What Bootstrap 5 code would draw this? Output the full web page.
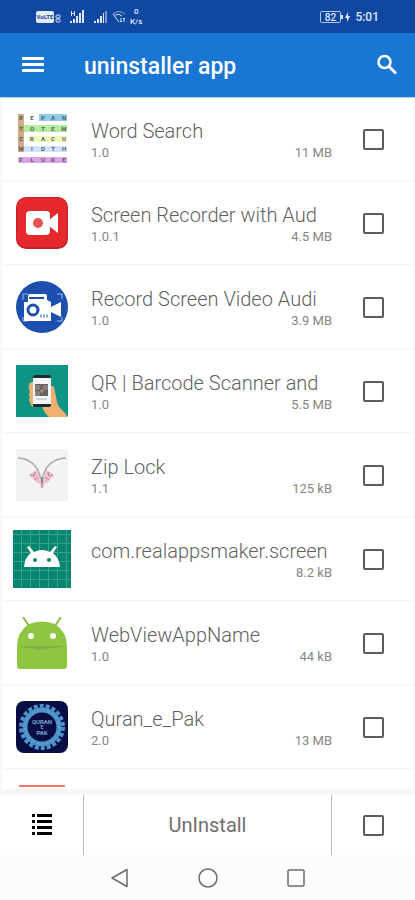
<!DOCTYPE html>
<html lang="en">
<head>
<meta charset="utf-8">
<meta name="viewport" content="width=device-width, initial-scale=1">
<title>uninstaller app</title>
<link href="https://cdn.jsdelivr.net/npm/bootstrap@5.3.0/dist/css/bootstrap.min.css" rel="stylesheet">
<style>
  body { font-family: Roboto, "Liberation Sans", sans-serif; color: #5f5f5f; background: #fafafa; }
  svg { display: block; flex: none; }
  .status-bar { height: 33px; padding: 0 36px; background: #0f47a1; color: #dfe8f8; font-size: 12px; font-weight: 500; }
  .net-speed { font-size: 8px; line-height: 10px; text-align: center; }
  .title-bar { height: 65px; padding: 0 16px 0 20px; background: #1976d2; border-bottom: 1px solid #b5d3f1; }
  .title-bar h1 { font-size: 23px; line-height: 28px; font-weight: 500; margin-left: 38px; padding-top: 3px; }
  .app-list { min-height: 0; border: solid #f7f7f7; border-width: 0 2px 6px; background: #fff; }
  .app-row { height: 84px; border-bottom: 2px solid #f6f6f6; }
  .side-cell { width: 80px; }
  .app-name { font-size: 20px; line-height: 24px; font-weight: 300; }
  .app-meta { font-size: 13px; line-height: 20px; color: #858585; }
  .app-info { padding: 4px 1px 0 9px; }
  .form-check-input.pick { width: 21px; height: 21px; margin: 0; border: 2px solid #5c5c5c; border-radius: 2px; background-color: #fff; }
  .form-check-input.pick:checked { background-color: #1976d2; border-color: #1976d2; }
  .action-bar { height: 60px; background: #fff; }
  .action-bar .side-cell { width: 83px; }
  .uninstall { font-size: 20px; line-height: 24px; color: #707070; border: solid #bdbdbd; border-width: 0 1px; }
  .system-nav { height: 45px; background: #fcfcfc; gap: 64px; }
</style>
<script defer src="https://cdn.jsdelivr.net/npm/bootstrap@5.3.0/dist/js/bootstrap.bundle.min.js"></script>
</head>
<body>
<div class="vh-100 d-flex flex-column overflow-hidden">

  <div class="status-bar d-flex align-items-center flex-shrink-0">
    <svg width="25" height="14" viewBox="0 0 25 14" role="img" aria-label="VoLTE">
      <rect y="1" width="18" height="12" rx="2" fill="#e3ebf8"/>
      <text x="9" y="9" font-size="6" font-weight="700" text-anchor="middle" fill="#0f47a1">VoLTE</text>
      <rect x="20" y="5" width="4" height="3" rx="1" fill="none" stroke="#e3ebf8"/><rect x="20" y="9" width="4" height="3" rx="1" fill="none" stroke="#e3ebf8"/>
    </svg>
    <svg class="ms-2" width="16" height="14" viewBox="0 0 16 14" fill="#dce6f6" aria-hidden="true"><path d="M1 13v-2h2v2zM4 13V9h2v4zM7 13V6h2v7zM10 13V3h2v10zM13 13V0h2v13zM2 1h1v2h2V1h1v5H5V4H3v2H2z"/></svg>
    <svg class="ms-2" width="15" height="14" viewBox="0 0 15 14" fill="#dce6f6" aria-hidden="true"><path d="M1 13v-2h2v2zM4 13V9h2v4zM7 13V6h2v7zM10 13V3h1v10z"/><path d="M12 13V1h2v12z" opacity=".5"/></svg>
    <svg class="ms-1" width="14" height="14" viewBox="0 0 14 14" fill="none" stroke="#dce6f6" aria-hidden="true"><path d="M1 4q6-5 12 0" opacity=".6"/><path d="M1 4l6 8M3 5q4-2 7 1M9 12V8m-1 3 1 1 1-1M12 12V8m-1 1 1-1 1 1"/></svg>
    <div class="net-speed ms-1">0<br>K/s</div>
    <svg class="ms-auto" width="31" height="14" viewBox="0 0 31 14" role="img" aria-label="Battery 82%, charging">
      <rect x=".5" y="1.500" width="20" height="11" rx="1" fill="none" stroke="#b7caec"/>
      <path d="M22 5v4" stroke="#dce6f6" stroke-width="2"/>
      <text x="10.500" y="11" font-size="10" text-anchor="middle" fill="#dce6f6">82</text>
      <path d="M28 2l-3 6h2v4l3-6h-2z" fill="#e8effa"/>
    </svg>
    <span class="ms-1">5:01</span>
  </div>

  <header class="title-bar d-flex align-items-center flex-shrink-0 text-white">
    <button class="btn p-0 border-0 text-white" type="button" aria-label="Menu">
      <svg width="26" height="26" viewBox="0 0 26 26" fill="currentColor"><path d="M2 5h22v3H2zM2 11h22v3H2zM2 17h22v3H2z"/></svg>
    </button>
    <h1 class="mb-0">uninstaller app</h1>
    <button class="btn p-0 border-0 text-white ms-auto" type="button" aria-label="Search">
      <svg width="24" height="24" viewBox="0 0 24 24" fill="none" stroke="currentColor"><circle cx="9.500" cy="9" r="6" stroke-width="2.500"/><path d="M14 13.500l7 7" stroke-width="3"/></svg>
    </button>
  </header>

  <main class="app-list flex-grow-1 overflow-hidden">
    <ul class="list-unstyled mb-0">
      <li class="app-row d-flex align-items-center">
        <div class="side-cell d-flex justify-content-center">
          <svg width="52" height="52" viewBox="0 0 52 52" aria-hidden="true">
            <path fill="#8ecbe8" d="M23 1h28v7H23z"/><path fill="#b2ec9c" d="M2 12h49v7H2z"/><path fill="#edf9b9" d="M13 23h38v6H13z"/><path fill="#cfe4fa" d="M2 33h49v6H2z"/><path fill="#d9a4e8" d="M2 44h49v6H2z"/><path fill="#c89d77" fill-opacity=".85" d="M2 1h6v38H2z"/>
            <g font-size="6" font-weight="700" fill="#59605b" text-anchor="middle">
              <text x="5 16 27 37 48" y="7">BEPAN</text><text x="5 16 27 37 48" y="18">TOTEM</text><text x="5 16 27 37 48" y="28">ERACU</text><text x="5 16 27 37 48" y="38">WIDTH</text><text x="5 16 27 37 48" y="49">FLUKE</text>
            </g>
          </svg>
        </div>
        <div class="app-info flex-grow-1">
          <div class="app-name"><label for="a1">Word Search</label></div>
          <div class="app-meta d-flex justify-content-between"><span>1.0</span><span>11 MB</span></div>
        </div>
        <div class="side-cell d-flex justify-content-center"><input class="form-check-input pick" type="checkbox" id="a1"></div>
      </li>
      <li class="app-row d-flex align-items-center">
        <div class="side-cell d-flex justify-content-center">
          <svg width="52" height="52" viewBox="0 0 52 52" aria-hidden="true">
            <rect width="52" height="52" rx="10" fill="#c92127"/><rect x="1" y="1" width="50" height="49" rx="9" fill="#e5282c"/>
            <rect x="10" y="14" width="24" height="24" rx="4" fill="#fff"/><path d="M33 23l9-7v20l-9-7z" fill="#fff"/><circle cx="22" cy="26" r="5" fill="#e8514f"/>
          </svg>
        </div>
        <div class="app-info flex-grow-1">
          <div class="app-name"><label for="a2">Screen Recorder with Aud</label></div>
          <div class="app-meta d-flex justify-content-between"><span>1.0.1</span><span>4.5 MB</span></div>
        </div>
        <div class="side-cell d-flex justify-content-center"><input class="form-check-input pick" type="checkbox" id="a2"></div>
      </li>
      <li class="app-row d-flex align-items-center">
        <div class="side-cell d-flex justify-content-center">
          <svg width="52" height="52" viewBox="0 0 52 52" aria-hidden="true">
            <circle cx="26" cy="26" r="26" fill="#1c4fae"/>
            <path d="M7 19v-6h5M41 13h5v5M7 36v4h5M41 40h5v-4" fill="none" stroke="#9db9ea"/>
            <path d="M8 21h4v-6q0-2 2-2h15q2 0 2 2v4l4 2v5l10-5v15l-10-5v9H8z" fill="#fff"/><path d="M13 16h15v2H13z" fill="#1c4fae"/>
            <circle cx="17" cy="29" r="5" fill="#fff" stroke="#1c4fae" stroke-width="3"/><path d="M24 35h8" stroke="#8aa6d8" stroke-width="3" stroke-dasharray="2 1"/>
          </svg>
        </div>
        <div class="app-info flex-grow-1">
          <div class="app-name"><label for="a3">Record Screen Video Audi</label></div>
          <div class="app-meta d-flex justify-content-between"><span>1.0</span><span>3.9 MB</span></div>
        </div>
        <div class="side-cell d-flex justify-content-center"><input class="form-check-input pick" type="checkbox" id="a3"></div>
      </li>
      <li class="app-row d-flex align-items-center">
        <div class="side-cell d-flex justify-content-center">
          <svg width="52" height="52" viewBox="0 0 52 52" aria-hidden="true">
            <path fill="#0e9485" d="M0 0h52v52H0z"/>
            <path d="M13 20q0-3 4-3v25q-3-2-3-5-2-2 0-5-2-2 0-5-2-3-1-7zM33 24q3-5 5-2l3 15q1 5 8 11l3 4H33q-6-5-7-12z" fill="#efb071"/>
            <rect x="17" y="10" width="18" height="32" rx="2" fill="#202a30"/><path fill="#f6f6f6" d="M17 13h18v26H17z"/>
            <path fill="#6d625f" d="M19 19h13v12H19z"/><path d="M20 21h3v3h-3zM28 21h3v3h-3zM20 27h3v3h-3zM25 25h2v2h-2z" fill="none" stroke="#a39c98"/><path d="M20 34h11" stroke="#8db9db"/>
          </svg>
        </div>
        <div class="app-info flex-grow-1">
          <div class="app-name"><label for="a4">QR | Barcode Scanner and</label></div>
          <div class="app-meta d-flex justify-content-between"><span>1.0</span><span>5.5 MB</span></div>
        </div>
        <div class="side-cell d-flex justify-content-center"><input class="form-check-input pick" type="checkbox" id="a4"></div>
      </li>
      <li class="app-row d-flex align-items-center">
        <div class="side-cell d-flex justify-content-center">
          <svg width="52" height="52" viewBox="0 0 52 52" aria-hidden="true">
            <path fill="#f3f3f3" d="M0 0h52v52H0z"/>
            <path d="M2 9q19 1 23 22M50 9Q30 10 26 31" fill="none" stroke="#a5adac" stroke-width="1.500"/>
            <path d="M13 26l7-5 5 9 6-9 7 5-7 8h-2l-3 6-3-6h-2z" fill="#f0bfd0"/><path d="M14 26l4 1 1-4M18 31l4-3M37 26l-4 1-1-4M33 31l-4-3M26 34v5" fill="none" stroke="#bd809b"/><path d="M26 28v6" stroke="#868a8c" stroke-width="2"/>
          </svg>
        </div>
        <div class="app-info flex-grow-1">
          <div class="app-name"><label for="a5">Zip Lock</label></div>
          <div class="app-meta d-flex justify-content-between"><span>1.1</span><span>125 kB</span></div>
        </div>
        <div class="side-cell d-flex justify-content-center"><input class="form-check-input pick" type="checkbox" id="a5"></div>
      </li>
      <li class="app-row d-flex align-items-center">
        <div class="side-cell d-flex justify-content-center">
          <svg width="58" height="58" viewBox="0 0 58 58" aria-hidden="true">
            <path fill="#06866f" d="M0 0h58v58H0z"/>
            <path d="M8.500 0v58M17.500 0v58M26.500 0v58M35.500 0v58M44.500 0v58M53.500 0v58M0 4.500h58M0 13.500h58M0 22.500h58M0 31.500h58M0 40.500h58M0 49.500h58" stroke="#3a9f8d"/>
            <path d="M11 37q1-10 7-14l-4-6 2-1 5 6q8-4 16 0l5-6 2 1-4 6q6 5 7 14z" fill="#fff"/><circle cx="22" cy="30" r="2" fill="#06866f"/><circle cx="36" cy="30" r="2" fill="#06866f"/>
          </svg>
        </div>
        <div class="app-info flex-grow-1">
          <div class="app-name"><label for="a6">com.realappsmaker.screen</label></div>
          <div class="app-meta text-end">8.2 kB</div>
        </div>
        <div class="side-cell d-flex justify-content-center"><input class="form-check-input pick" type="checkbox" id="a6"></div>
      </li>
      <li class="app-row d-flex align-items-center">
        <div class="side-cell d-flex justify-content-center">
          <svg width="52" height="52" viewBox="0 0 52 52" aria-hidden="true">
            <path d="M7 0l6 9M45 0l-6 9" stroke="#8bbd4b" stroke-width="2"/>
            <path d="M1 29Q1 15 13 7q13-5 26 0 12 8 12 22v20q0 3-3 3H4q-3 0-3-3z" fill="#8fc641"/><path d="M1 29h50L24 33z" fill="#7eb344"/>
            <circle cx="15" cy="19" r="3" fill="#fff"/><circle cx="37" cy="19" r="3" fill="#fff"/>
          </svg>
        </div>
        <div class="app-info flex-grow-1">
          <div class="app-name"><label for="a7">WebViewAppName</label></div>
          <div class="app-meta d-flex justify-content-between"><span>1.0</span><span>44 kB</span></div>
        </div>
        <div class="side-cell d-flex justify-content-center"><input class="form-check-input pick" type="checkbox" id="a7"></div>
      </li>
      <li class="app-row d-flex align-items-center">
        <div class="side-cell d-flex justify-content-center">
          <svg width="52" height="52" viewBox="0 0 52 52" aria-hidden="true">
            <rect width="52" height="52" rx="8" fill="#080d43"/>
            <circle cx="26" cy="26" r="17" fill="none" stroke="#4c91c7" stroke-width="5"/><circle cx="26" cy="26" r="21" fill="none" stroke="#4c91c7" stroke-width="4" stroke-dasharray="4 2"/><circle cx="26" cy="26" r="17" fill="none" stroke="#78b4dc" stroke-dasharray="2 3"/>
            <g font-size="6" font-weight="700" fill="#78a4d4" text-anchor="middle"><text x="26" y="23">QURAN</text><text x="26" y="28" font-size="5">E</text><text x="26" y="34">PAK</text></g>
          </svg>
        </div>
        <div class="app-info flex-grow-1">
          <div class="app-name"><label for="a8">Quran_e_Pak</label></div>
          <div class="app-meta d-flex justify-content-between"><span>2.0</span><span>13 MB</span></div>
        </div>
        <div class="side-cell d-flex justify-content-center"><input class="form-check-input pick" type="checkbox" id="a8"></div>
      </li>
      <li class="app-row d-flex align-items-center" aria-hidden="true">
        <div class="side-cell d-flex justify-content-center">
          <svg width="52" height="52" viewBox="0 0 52 52"><rect x="3" width="46" height="52" rx="1" fill="#f07562"/><path d="M3 2h46v50H3z" fill="#fff"/></svg>
        </div>
      </li>
    </ul>
  </main>

  <div class="action-bar d-flex flex-shrink-0">
    <button class="btn side-cell p-0 border-0 rounded-0 d-flex align-items-center justify-content-center text-black" type="button" aria-label="List options">
      <svg width="22" height="22" viewBox="0 0 22 22" fill="currentColor"><path d="M1 0h3v3H1zM6 0h15v3H6zM1 6h3v3H1zM6 6h15v3H6zM1 12h3v3H1zM6 12h15v3H6zM1 18h3v3H1zM6 18h15v3H6z"/></svg>
    </button>
    <button class="btn uninstall flex-grow-1 p-0 rounded-0" type="button">UnInstall</button>
    <div class="side-cell d-flex align-items-center justify-content-center"><input class="form-check-input pick" type="checkbox" id="all" aria-label="Select all"></div>
  </div>

  <nav class="system-nav d-flex align-items-center justify-content-center flex-shrink-0" aria-label="System">
    <button class="btn p-0 border-0" type="button" aria-label="Back"><svg width="24" height="24" viewBox="0 0 24 24" fill="none" stroke="#6b6b6b" stroke-width="1.500"><path d="M19 3.500v17L4 12z" stroke-linejoin="round"/></svg></button>
    <button class="btn p-0 border-0" type="button" aria-label="Home"><svg width="24" height="24" viewBox="0 0 24 24" fill="none" stroke="#6b6b6b" stroke-width="1.500"><circle cx="12" cy="12" r="9"/></svg></button>
    <button class="btn p-0 border-0" type="button" aria-label="Recents"><svg width="24" height="24" viewBox="0 0 24 24" fill="none" stroke="#6b6b6b" stroke-width="1.500"><rect x="4" y="4" width="16" height="16" rx="1"/></svg></button>
  </nav>
</div>
</body>
</html>
